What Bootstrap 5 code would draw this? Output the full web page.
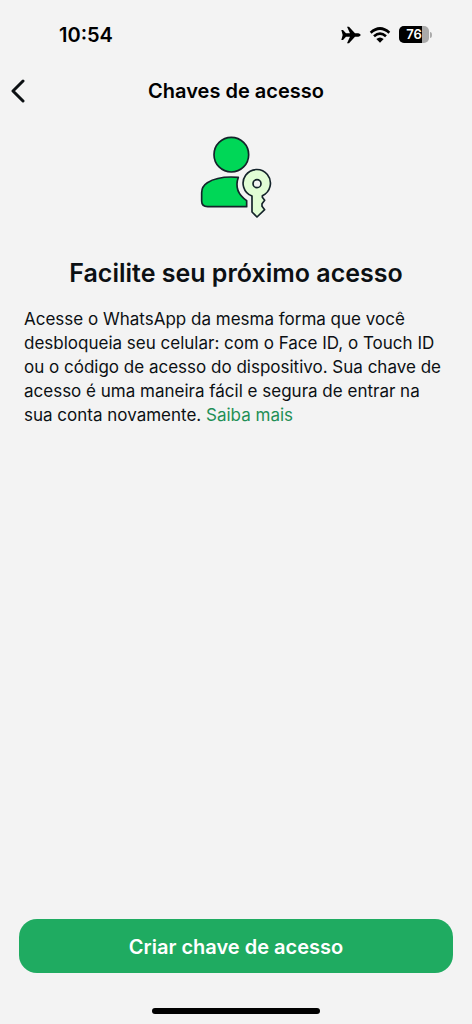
<!DOCTYPE html>
<html lang="pt-BR">
<head>
<meta charset="utf-8">
<meta name="viewport" content="width=device-width, initial-scale=1">
<title>Chaves de acesso</title>
<link rel="stylesheet" href="https://cdn.jsdelivr.net/npm/bootstrap@5.3.0/dist/css/bootstrap.min.css">
<style>
  body { background: #f3f3f3; color: #0c1013; font-family: Inter, "Liberation Sans", sans-serif; }
  .status-bar { height: 70px; padding: 0 40px 0 59px; }
  .clock { font-size: 20px; line-height: 24px; color: #000; }
  .title-bar { display: grid; grid-template-columns: 44px 1fr 44px; height: 42px; }
  .title-bar h1 { font-size: 20px; line-height: 24px; color: #000; }
  .back-btn { padding: 0 0 0 9px; line-height: 1; }
  .content { padding: 13px 24px 0; }
  .headline { font-size: 25px; line-height: 32px; margin: 32px 0 18px; }
  .intro { font-size: 17px; line-height: 24px; }
  .intro a { color: #1f8f56; }
  .action-bar { padding: 0 19px 10px; }
  .btn-create { --bs-btn-color: #fff; --bs-btn-bg: #1fab61; --bs-btn-hover-color: #fff; --bs-btn-hover-bg: #1a9755; --bs-btn-active-color: #fff; --bs-btn-active-bg: #178a4d; --bs-btn-border-width: 0; height: 54px; padding: 8px 12px 6px; border-radius: 18px; font-size: 20px; line-height: 24px; }
  .home-indicator { width: 168px; height: 6px; margin-top: 35px; background: #000; }
</style>
</head>
<body>
<div class="d-flex flex-column min-vh-100">
  <div class="status-bar d-flex align-items-center justify-content-between">
    <span class="clock fw-semibold">10:54</span>
    <div class="d-flex align-items-center gap-2">
      <svg width="20" height="18" viewBox="0 0 60 54" role="img" aria-label="Modo avião"><path d="M1 12h5l9 10h12L18 2h6l18 20h10q7 2 7 5t-7 5H42L24 52h-6l9-20H15L6 42H1l4-15z"/></svg>
      <svg width="22" height="18" viewBox="0 0 66 54" role="img" aria-label="Wi-Fi"><g fill="none" stroke="#000" stroke-width="8"><path d="M5 20q28-25 56 0"/><path d="M15 31q18-16 36 0"/></g><path d="M22 39q11-9 22 0L33 50z"/></svg>
      <svg width="33" height="18" viewBox="0 0 33 18" role="img" aria-label="Bateria 76%"><defs><clipPath id="cell"><rect width="30" height="17" rx="5"/></clipPath></defs><g clip-path="url(#cell)"><path fill="#aaa" d="M0 0h30v17H0z"/><path d="M0 0h23v17H0z"/></g><path fill="#aaa" d="M31 6q2 0 2 3t-2 3z"/><text x="15" y="13" text-anchor="middle" font-size="13" font-weight="600" fill="#fff">76</text></svg>
    </div>
  </div>

  <header class="title-bar align-items-center">
    <button type="button" class="btn back-btn border-0 text-start" aria-label="Voltar">
      <svg width="18" height="24" viewBox="0 0 18 24" fill="none" stroke="#0c1013" stroke-width="3" stroke-linecap="round" stroke-linejoin="round"><path d="M14 2L4 12l10 10"/></svg>
    </button>
    <h1 class="fw-semibold text-center mb-0">Chaves de acesso</h1>
  </header>

  <main class="content flex-grow-1">
    <svg class="d-block mx-auto" width="95" height="100" viewBox="-1 -1 285 300" stroke="#14232a" stroke-width="5" stroke-linejoin="round" aria-hidden="true">
      <circle cx="126" cy="88" r="52" fill="#00d757"/>
      <path fill="#00d757" d="M147 156Q88 151 54 172Q37 183 37 202V227Q37 244 55 244H172V226Q132 199 147 156Z"/>
      <path fill="#e1fdd5" d="M188 212A41 41 0 1 1 219 211V216L226 225L218 235V243L226 253L203 275L188 260Z"/>
      <circle cx="203" cy="175" r="12" fill="#f3f3f3"/>
    </svg>
    <h2 class="headline fw-semibold text-center">Facilite seu próximo acesso</h2>
    <p class="intro mb-0">Acesse o WhatsApp da mesma forma que você desbloqueia seu celular: com o Face ID, o Touch ID ou o código de acesso do dispositivo. Sua chave de acesso é uma maneira fácil e segura de entrar na sua conta novamente. <a href="#saiba-mais" class="text-decoration-none">Saiba mais</a></p>
  </main>

  <footer class="action-bar">
    <button type="button" class="btn btn-create fw-semibold w-100">Criar chave de acesso</button>
    <div class="home-indicator rounded-pill mx-auto"></div>
  </footer>
</div>
<script src="https://cdn.jsdelivr.net/npm/bootstrap@5.3.0/dist/js/bootstrap.bundle.min.js"></script>
</body>
</html>
